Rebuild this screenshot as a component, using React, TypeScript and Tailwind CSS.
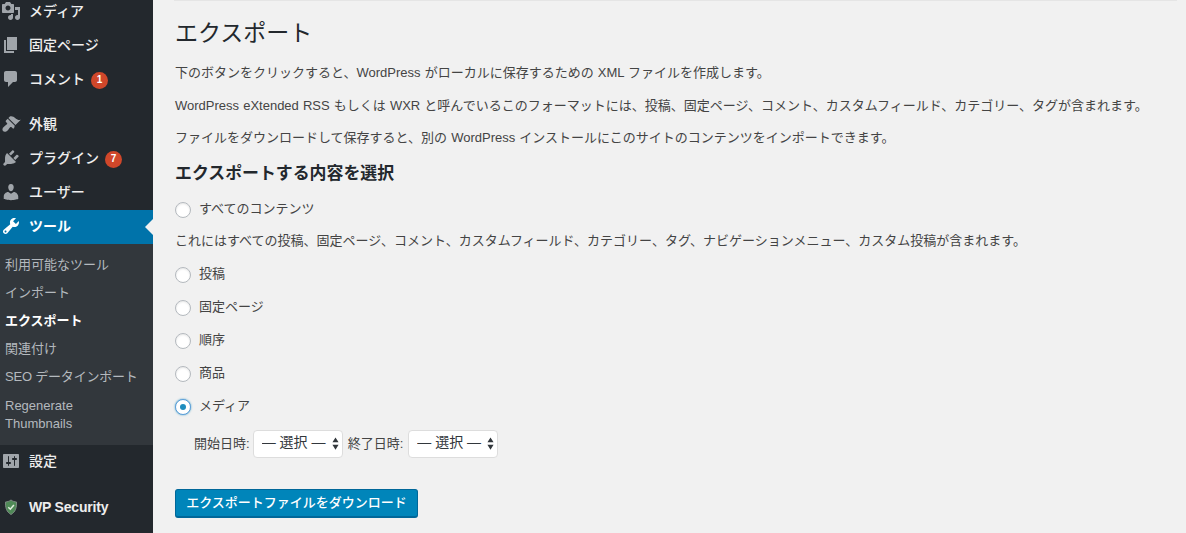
import React from "react";

const P: Record<string, string> = {
  media: "M13 11V4c0-.55-.45-1-1-1h-1.67L9 1H5L3.67 3H2c-.55 0-1 .45-1 1v7c0 .55.45 1 1 1h10c.55 0 1-.45 1-1zM7 4.5c1.38 0 2.5 1.12 2.5 2.5S8.38 9.5 7 9.5 4.5 8.38 4.5 7 5.62 4.5 7 4.5zM14 6h5v10.5c0 1.38-1.12 2.5-2.5 2.5S14 17.88 14 16.5s1.12-2.5 2.5-2.5c.17 0 .34.02.5.05V9h-3V6zm-4 8.05V13h2v3.5c0 1.38-1.12 2.5-2.5 2.5S7 17.88 7 16.5 8.12 14 9.5 14c.17 0 .34.02.5.05z",
  page: "M6 15V2h10v13H6zm-1 1h8v2H3V5h2v11z",
  comments: "M5 2h9c1.1 0 2 .9 2 2v7c0 1.1-.9 2-2 2h-2l-5 5v-5H5c-1.1 0-2-.9-2-2V4c0-1.1.9-2 2-2z",
  appearance: "M14.48 11.06L7.41 3.99l1.5-1.5c.5-.56 2.3-.47 3.51.32 1.21.8 1.43 1.28 2.91 2.1 1.18.64 2.45 1.26 4.45.85zm-.71.71L6.7 4.7 4.93 6.47c-.39.39-.39 1.02 0 1.41l1.06 1.06c.39.39.39 1.03 0 1.42-.6.6-1.43 1.11-2.21 1.69-.35.26-.7.53-1.01.84C1.43 13.71.98 15.77 2 17c1.02 1.23 3.29.77 4.62-.56.31-.31.58-.66.84-1.01.58-.78 1.09-1.61 1.69-2.21.39-.39 1.03-.39 1.42 0l1.06 1.06c.39.39 1.02.39 1.41 0z",
  plugins: "M13.11 4.36L9.87 7.6 8 5.73l3.24-3.24c.35-.34 1.05-.2 1.56.32.52.51.66 1.21.31 1.55zm-8 1.77l.91-1.12 9.01 9.01-1.19.84c-.71.71-2.63 1.16-3.82 1.16H6.14L4.9 17.26c-.59.59-1.54.59-2.12 0-.59-.58-.59-1.53 0-2.12l1.24-1.24v-3.88c0-1.13.4-3.19 1.09-3.89zm7.26 3.97l3.24-3.24c.34-.35 1.04-.21 1.55.31.52.51.66 1.21.31 1.55l-3.24 3.25z",
  users: "M10 9.25c-2.27 0-2.73-3.44-2.73-3.44C7 4.02 7.82 2 9.97 2c2.16 0 2.98 2.02 2.71 3.81 0 0-.41 3.44-2.68 3.44zm0 2.57L12.72 10c2.39 0 4.52 2.33 4.52 4.53v2.49s-3.65 1.13-7.24 1.13c-3.65 0-7.24-1.13-7.24-1.13v-2.49c0-2.25 1.94-4.48 4.47-4.48z",
  tools: "M16.68 9.77c-1.34 1.34-3.3 1.67-4.95.99l-5.41 6.52c-.99.99-2.59.99-3.58 0s-.99-2.59 0-3.57l6.52-5.42c-.68-1.65-.35-3.61.99-4.95 1.28-1.28 3.12-1.62 4.72-1.06l-2.89 2.89 2.82 2.82 2.86-2.87c.53 1.58.18 3.39-1.08 4.65zM3.81 16.21c.4.39 1.04.39 1.43 0 .4-.4.4-1.04 0-1.43-.39-.4-1.03-.4-1.43 0-.39.39-.39 1.03 0 1.43z",
  settings: "M18 16V4c0-.55-.45-1-1-1H3c-.55 0-1 .45-1 1v12c0 .55.45 1 1 1h14c.55 0 1-.45 1-1zM8 11h1c.55 0 1 .45 1 1s-.45 1-1 1H8v1.5c0 .28-.22.5-.5.5s-.5-.22-.5-.5V13H6c-.55 0-1-.45-1-1s.45-1 1-1h1V5.5c0-.28.22-.5.5-.5s.5.22.5.5V11zm5-2h-1c-.55 0-1-.45-1-1s.45-1 1-1h1V5.5c0-.28.22-.5.5-.5s.5.22.5.5V7h1c.55 0 1 .45 1 1s-.45 1-1 1h-1v5.5c0 .28-.22.5-.5.5s-.5-.22-.5-.5V9z",
};

function Icon({ name, active }: { name: string; active?: boolean }) {
  return (
    <svg viewBox="0 0 20 20" className={`w-5 h-5 shrink-0 ${active ? "fill-white" : "fill-[#a0a5aa]"}`}>
      <path d={P[name]} />
    </svg>
  );
}

function Shield() {
  return (
    <svg viewBox="0 0 20 20" className="w-5 h-5 shrink-0">
      <path d="M10 3c2 1.400 3.600 1.900 5.500 2 .2 5.400-.8 9.800-5.500 12.500C5.300 14.800 4.300 10.400 4.500 5c1.900-.1 3.500-.6 5.500-2z" fill="#4f8a57" stroke="#7d8a82" strokeWidth="1" />
      <path d="M7.300 10.200l2 2L12.900 8" fill="none" stroke="#dfeedd" strokeWidth="1.500" />
    </svg>
  );
}

function Badge({ n }: { n: string }) {
  return (
    <span className="ml-[6px] translate-y-[1px] w-[17px] h-[17px] rounded-full bg-[#d0472a] text-white text-[10px] font-bold flex items-center justify-center leading-none">
      {n}
    </span>
  );
}

function MenuItem({ icon, label, badge, active, bold, className = "" }: { icon?: string; label: string; badge?: string; active?: boolean; bold?: boolean; className?: string }) {
  return (
    <div className={`relative h-[34px] flex items-center pl-[1px] text-[14px] text-[#eeeeee] ${active ? "bg-[#0073aa] text-white" : ""} ${className}`}>
      {icon ? <Icon name={icon} active={active} /> : <Shield />}
      <span className={`ml-[8px] ${bold ? "font-bold" : "font-medium"}`}>{label}</span>
      {badge && <Badge n={badge} />}
      {active && (
        <span className="absolute right-0 top-[9px] w-0 h-0 border-y-[8px] border-y-transparent border-r-[8px] border-r-[#f1f1f1]" />
      )}
    </div>
  );
}

function Sub({ children, current, className = "" }: { children: React.ReactNode; current?: boolean; className?: string }) {
  return (
    <div className={`px-[5px] py-[5px] text-[13px] leading-[18px] ${current ? "text-white font-bold" : "text-[#b4b9be]"} ${className}`}>
      {children}
    </div>
  );
}

function Radio({ label, checked, className = "" }: { label: string; checked?: boolean; className?: string }) {
  return (
    <div className={`flex items-center h-[18px] ${className}`}>
      <span className={`w-4 h-4 translate-y-[1px] rounded-full bg-white border flex items-center justify-center shrink-0 ${checked ? "border-[#5b9dd9] shadow-[0_0_2px_rgba(30,140,190,0.8)]" : "border-[#b4b9be] shadow-[inset_0_1px_2px_rgba(0,0,0,0.1)]"}`}>
        {checked && <span className="w-[6px] h-[6px] rounded-full bg-[#1e8cbe]" />}
      </span>
      <span className="ml-2">{label}</span>
    </div>
  );
}

function Select({ className = "" }: { className?: string }) {
  return (
    <span className={`relative inline-flex h-[28px] w-[90px] ${className}`}>
      <select defaultValue="0" className="appearance-none w-full h-full rounded-[4px] bg-white border border-[#dddddd] pl-[8px] pb-[3px] text-[14px] text-[#32373c] outline-none">
        <option value="0">— 選択 —</option>
      </select>
      <svg viewBox="0 0 8 14" className="absolute right-[4px] top-[7px] w-[7px] h-[13px] fill-[#32373c]">
        <path d="M4 0l3.500 5.500h-7zM4 14l-3.500-5.500h7z" />
      </svg>
    </span>
  );
}

export default function App() {
  return (
    <div
      className="flex w-[1186px] h-[533px] overflow-hidden bg-[#f1f1f1] text-[13px] text-[#444444]"
      style={{ fontFamily: '"Liberation Sans", "Noto Sans CJK JP", sans-serif' }}
    >
      <aside className="w-[153px] shrink-0 bg-[#23282d]">
        <div className="-mt-[6px]">
          <MenuItem icon="media" label="メディア" />
          <MenuItem icon="page" label="固定ページ" />
          <MenuItem icon="comments" label="コメント" badge="1" />
          <div className="h-[12px]" />
          <MenuItem icon="appearance" label="外観" className="pb-[2px]" />
          <MenuItem icon="plugins" label="プラグイン" badge="7" className="pb-[2px]" />
          <MenuItem icon="users" label="ユーザー" className="pb-[2px]" />
          <MenuItem icon="tools" label="ツール" active bold className="pb-[2px]" />
          <div className="bg-[#32373c] pt-[7px] pb-[7px] h-[201px]">
            <Sub>利用可能なツール</Sub>
            <Sub>インポート</Sub>
            <Sub current>エクスポート</Sub>
            <Sub>関連付け</Sub>
            <Sub className="tracking-[-0.2px]">SEO データインポート</Sub>
            <Sub className="w-[110px] mt-[1px]">Regenerate Thumbnails</Sub>
          </div>
          <MenuItem icon="settings" label="設定" className="pb-[2px]" />
          <div className="h-[11px]" />
          <MenuItem label="WP Security" bold className="tracking-[-0.2px]" />
        </div>
      </aside>
      <main className="flex-1 min-w-0 pl-[22px] pr-[9px] [word-spacing:0.5px]">
        <div className="h-px bg-[#e5e5e5] -ml-[1px]" />
        <h1 className="mt-[16px] text-[23px] leading-[32px] text-[#23282d] font-normal">エクスポート</h1>
        <p className="mt-[15px] leading-[18px]">下のボタンをクリックすると、WordPress がローカルに保存するための XML ファイルを作成します。</p>
        <p className="mt-[15px] leading-[18px]">WordPress eXtended RSS もしくは WXR と呼んでいるこのフォーマットには、投稿、固定ページ、コメント、カスタムフィールド、カテゴリー、タグが含まれます。</p>
        <p className="mt-[14px] leading-[18px]">ファイルをダウンロードして保存すると、別の WordPress インストールにこのサイトのコンテンツをインポートできます。</p>
        <h2 className="mt-[15px] text-[16.9px] leading-[24px] font-semibold text-[#23282d]">エクスポートする内容を選択</h2>
        <Radio className="mt-[14px]" label="すべてのコンテンツ" />
        <p className="mt-[14px] leading-[18px]">これにはすべての投稿、固定ページ、コメント、カスタムフィールド、カテゴリー、タグ、ナビゲーションメニュー、カスタム投稿が含まれます。</p>
        <Radio className="mt-[15px]" label="投稿" />
        <Radio className="mt-[15px]" label="固定ページ" />
        <Radio className="mt-[15px]" label="順序" />
        <Radio className="mt-[15px]" label="商品" />
        <Radio className="mt-[15px]" label="メディア" checked />
        <div className="mt-[15px] ml-[19px] flex items-center h-[28px]">
          <span>開始日時:</span>
          <Select className="ml-[3px]" />
          <span className="ml-[5px]">終了日時:</span>
          <Select className="ml-[5px]" />
        </div>
        <button className="mt-[31px] w-[243px] h-[29px] rounded-[3px] bg-[#0085ba] border border-[#006799] border-b-2 text-white text-[13px] font-medium flex items-center justify-center">
          エクスポートファイルをダウンロード
        </button>
      </main>
    </div>
  );
}
